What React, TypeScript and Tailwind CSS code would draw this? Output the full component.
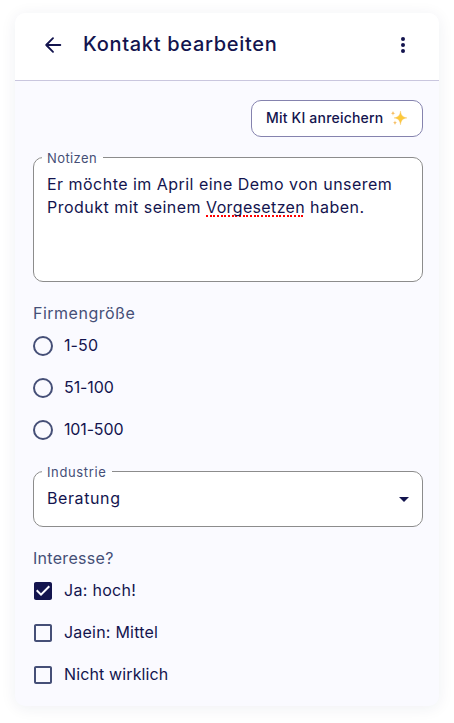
import * as React from "react";

type Option = {
  label: string;
  tracking: string;
};

const sizes: Option[] = [
  { label: "1-50", tracking: "tracking-[0.1px]" },
  { label: "51-100", tracking: "tracking-[-0.1px]" },
  { label: "101-500", tracking: "tracking-[-0.15px]" },
];

const interests: Option[] = [
  { label: "Ja: hoch!", tracking: "tracking-[0.3px]" },
  { label: "Jaein: Mittel", tracking: "tracking-[0.22px]" },
  { label: "Nicht wirklich", tracking: "tracking-[0.13px]" },
];

function Sparkles() {
  return (
    <svg
      className="mb-0.5"
      width="18"
      height="18"
      viewBox="0 0 18 18"
      aria-hidden="true"
    >
      <path
        d="M10.500 2c.7 4.600 1.800 6 6.500 6.900-4.700.9-5.800 2.200-6.500 6.900-.7-4.700-1.800-6-6.500-6.900 4.700-.9 5.800-2.300 6.500-6.900z"
        fill="#fdc93a"
        stroke="#f6c46a"
        strokeWidth="0.4"
      />
      <path
        d="M3 1.500c.2 1.900.7 2.500 2.500 2.800C3.700 4.600 3.200 5.200 3 7.100 2.800 5.200 2.300 4.600.6 4.300 2.300 4 2.800 3.400 3 1.500z"
        fill="#f6bd62"
      />
      <path
        d="M5 11.300c.2 1.700.6 2.200 2.200 2.500-1.600.3-2 .8-2.200 2.500-.2-1.700-.6-2.200-2.200-2.500 1.600-.3 2-.8 2.200-2.500z"
        fill="#f6bd62"
      />
    </svg>
  );
}

function Outlined({
  label,
  labelClass,
  className,
  children,
}: {
  label: string;
  labelClass: string;
  className: string;
  children: React.ReactNode;
}) {
  return (
    <fieldset
      className={`-mt-[10px] min-w-0 rounded-[10px] border border-[#8c8c8c] bg-white pl-2 ${className}`}
    >
      <legend
        className={`flex h-[21px] items-center whitespace-nowrap pl-[5px] pt-0.5 text-[13px] text-[#454f77] ${labelClass}`}
      >
        {label}
      </legend>
      {children}
    </fieldset>
  );
}

export default function App() {
  const [size, setSize] = React.useState("");
  const [checked, setChecked] = React.useState<string[]>(["Ja: hoch!"]);

  const toggle = (label: string) =>
    setChecked((c) =>
      c.includes(label) ? c.filter((l) => l !== label) : [...c, label]
    );

  return (
    <div className="h-[723px] w-[454px] overflow-hidden bg-white pl-[15px] pt-[13px] font-['Inter',sans-serif] text-base text-[#13144e]">
      <div className="h-[693px] w-[424px] overflow-hidden rounded-[10px] bg-[#fafaff] shadow-[0_2px_16px_rgba(30,40,90,0.07)]">
        <header className="flex h-[68px] items-center border-b border-[#c9c6de] bg-white pb-1 pl-[26px] pr-6">
          <button type="button" aria-label="Zurück">
            <svg
              width="24"
              height="24"
              viewBox="0 0 24 24"
              fill="none"
              stroke="currentColor"
              strokeWidth="1.9"
              strokeLinecap="round"
              strokeLinejoin="round"
            >
              <path d="M19.300 12H5.200M12 5.200 5.200 12l6.800 6.800" />
            </svg>
          </button>
          <h1 className="ml-[18px] pb-0.5 text-[20px] font-medium leading-7 tracking-[0.7px]">
            Kontakt bearbeiten
          </h1>
          <button type="button" aria-label="Mehr" className="ml-auto">
            <svg width="24" height="24" viewBox="0 0 24 24" fill="currentColor">
              <circle cx="12" cy="6" r="2" />
              <circle cx="12" cy="12" r="2" />
              <circle cx="12" cy="18" r="2" />
            </svg>
          </button>
        </header>

        <main className="pl-[18px] pr-4 pt-[19px]">
          <button
            type="button"
            className="ml-auto flex h-[37px] w-[172px] items-center whitespace-nowrap rounded-[10px] border border-[#8583ae] bg-white pl-[14px] text-left text-sm font-medium"
          >
            <span className="w-[124px] pb-0.5 tracking-[0.2px]">Mit KI anreichern</span>
            <Sparkles />
          </button>

          <div className="mt-5">
            <Outlined label="Notizen" labelClass="w-[61px] tracking-[0.4px]" className="h-[135px]">
              <p className="mt-[5px] whitespace-nowrap pl-[5px] leading-[23px]">
                <span className="tracking-[0.47px]">
                  Er möchte im April eine Demo von unserem
                </span>
                <br />
                <span className="tracking-[0.48px]">
                  Produkt mit seinem{" "}
                  <span className="bg-[repeating-linear-gradient(90deg,#f00_0_2px,transparent_2px_3.67px)] bg-[length:100%_2px] bg-[position:0_100%] bg-no-repeat tracking-[0.36px]">
                    Vorgesetzen
                  </span>{" "}
                  haben.
                </span>
              </p>
            </Outlined>
          </div>

          <div className="mt-[19px] leading-6 tracking-[0.5px] text-[#454f77]">Firmengröße</div>
          <div>
            {sizes.map((o) => (
              <label key={o.label} className="flex h-[42px] items-center">
                <input
                  type="radio"
                  name="size"
                  className="peer sr-only"
                  checked={size === o.label}
                  onChange={() => setSize(o.label)}
                />
                <span className="mr-[11px] size-5 rounded-full border-2 border-[#454f77] peer-checked:border-[6px]" />
                <span className={`pb-0.5 ${o.tracking}`}>{o.label}</span>
              </label>
            ))}
          </div>

          <div className="mt-5">
            <Outlined label="Industrie" labelClass="w-[70px] tracking-[0.63px]" className="h-[66px]">
              <div className="flex h-[34px] items-center pl-[5px] pr-[6px]">
                <span className="pb-0.5 tracking-[0.6px]">Beratung</span>
                <svg className="ml-auto" width="24" height="24" viewBox="0 0 24 24" fill="currentColor">
                  <path d="m7 10 5 5 5-5z" />
                </svg>
              </div>
            </Outlined>
          </div>

          <div className="mt-[19px] leading-6 tracking-[0.3px] text-[#454f77]">Interesse?</div>
          <div>
            {interests.map((o) => {
              const on = checked.includes(o.label);
              return (
                <label key={o.label} className="flex h-[42px] items-center">
                  <input
                    type="checkbox"
                    className="sr-only"
                    checked={on}
                    onChange={() => toggle(o.label)}
                  />
                  <svg
                    className={`-ml-0.5 mr-[9px] ${on ? "text-[#13144e]" : "text-[#454f77]"}`}
                    width="24"
                    height="24"
                    viewBox="0 0 24 24"
                    fill="currentColor"
                  >
                    {on ? (
                      <path d="M19 3H5c-1.110 0-2 .9-2 2v14c0 1.100.89 2 2 2h14c1.110 0 2-.9 2-2V5c0-1.100-.89-2-2-2zm-9 14l-5-5 1.410-1.410L10 14.170l7.590-7.590L19 8l-9 9z" />
                    ) : (
                      <path d="M19 5v14H5V5h14m0-2H5c-1.100 0-2 .9-2 2v14c0 1.100.9 2 2 2h14c1.100 0 2-.9 2-2V5c0-1.100-.9-2-2-2z" />
                    )}
                  </svg>
                  <span className={`pb-0.5 ${o.tracking}`}>{o.label}</span>
                </label>
              );
            })}
          </div>
        </main>
      </div>
    </div>
  );
}
